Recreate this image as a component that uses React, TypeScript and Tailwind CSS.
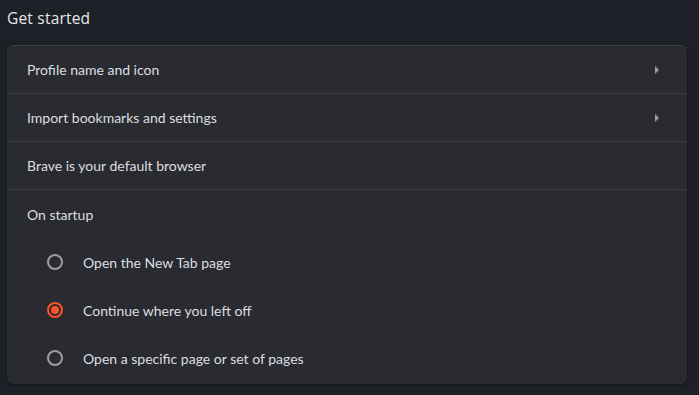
import { useState } from 'react';

const options = [
  'Open the New Tab page',
  'Continue where you left off',
  'Open a specific page or set of pages',
];

function Arrow() {
  return (
    <svg width="6" height="10" viewBox="0 0 6 10" className="text-[#9a9ba0]">
      <path d="M1 1 L5 5 L1 9 Z" fill="currentColor" />
    </svg>
  );
}

function Row({ label, arrow }: { label: string; arrow?: boolean }) {
  return (
    <div className="h-12 flex items-center justify-between pl-5 pr-[27px] border-b border-[#3c3d42]">
      <span>{label}</span>
      {arrow && <Arrow />}
    </div>
  );
}

export default function App() {
  const [selected, setSelected] = useState(1);

  return (
    <div className="w-[699px] h-[395px] bg-[#1e2028] px-[7px] text-[#dcdde0] font-['Lato','Noto_Sans',sans-serif] text-[14px] overflow-hidden">
      <h2 className="h-[45px] pt-[7px] text-[15.5px] text-[#e8e8ea] font-['Open_Sans','Noto_Sans',sans-serif] tracking-[0.2px]">Get started</h2>
      <div className="w-[680px] bg-[#2a2b30] rounded-md shadow-[0_1px_3px_rgba(0,0,0,0.45)] border-t border-[#3c3d42]">
        <Row label="Profile name and icon" arrow />
        <Row label="Import bookmarks and settings" arrow />
        <Row label="Brave is your default browser" />
        <div className="h-12 flex items-center pl-5">On startup</div>
        <div className="pb-[2px]">
          {options.map((o, i) => {
            const on = i === selected;
            return (
              <label
                key={o}
                onClick={() => setSelected(i)}
                className="h-12 flex items-center pl-[40px] cursor-pointer"
              >
                <span
                  className={`w-4 h-4 rounded-full border-2 flex items-center justify-center ${
                    on ? 'border-[#fb542b]' : 'border-[#9c9da2]'
                  }`}
                >
                  {on && <span className="w-2 h-2 rounded-full bg-[#fb542b]" />}
                </span>
                <span className="ml-5">{o}</span>
              </label>
            );
          })}
        </div>
      </div>
    </div>
  );
}
